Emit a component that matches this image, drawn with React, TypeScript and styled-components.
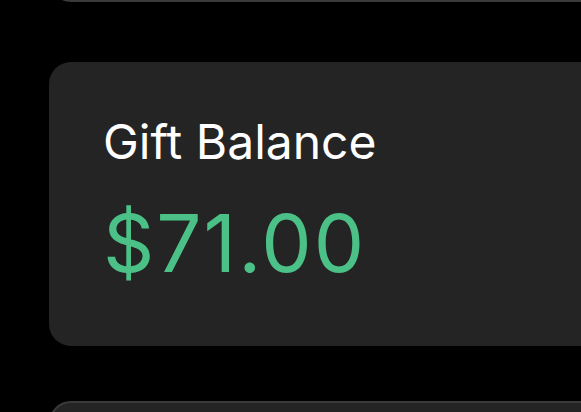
import React from "react";
import styled, { createGlobalStyle } from "styled-components";

const GlobalStyle = createGlobalStyle`
  html, body {
    margin: 0;
    padding: 0;
    background: #000;
    overflow: hidden;
  }
  body {
    font-family: Inter, "Noto Sans", "Liberation Sans", sans-serif;
  }
`;

const Page = styled.div`
  width: 581px;
  height: 412px;
  overflow: hidden;
  background: #000;
  display: flex;
  flex-direction: column;
  padding-left: 49px;
  box-sizing: border-box;
`;

const Card = styled.section<{ $bordered?: boolean; $offset: number; $height: number }>`
  flex: none;
  width: 620px;
  height: ${(p) => p.$height}px;
  margin-top: ${(p) => p.$offset}px;
  box-sizing: border-box;
  background: #242424;
  border-radius: 22px;
  border: ${(p) => (p.$bordered ? "2px solid #3a3a3a" : "none")};
  display: flex;
  flex-direction: column;
  padding: 52px 54px 0;
`;

const Label = styled.div`
  color: #ffffff;
  font-size: 48px;
  font-weight: 400;
  line-height: 56px;
  letter-spacing: 0;
`;

const Amount = styled.div`
  margin-top: 28px;
  color: #4bc187;
  font-size: 80px;
  font-weight: 400;
  line-height: 90px;
  letter-spacing: 2px;
`;

export default function App() {
  return (
    <>
      <GlobalStyle />
      <Page>
        <Card $bordered $offset={-98} $height={100} />
        <Card $offset={60} $height={284}>
          <Label>Gift Balance</Label>
          <Amount>$71.00</Amount>
        </Card>
        <Card $bordered $offset={55} $height={100} />
      </Page>
    </>
  );
}
